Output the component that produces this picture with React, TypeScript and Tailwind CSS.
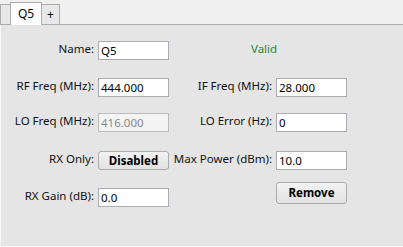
const font = "font-['Noto_Sans',sans-serif] text-[11.5px]";

function Field({ value, disabled }: { value: string; disabled?: boolean }) {
  return (
    <input
      readOnly
      value={value}
      className={`h-[19px] w-[71px] border px-[2px] outline-none ${font} ${
        disabled
          ? "border-[#bcbcbc] bg-[#f4f4f4] text-[#8a8a8a]"
          : "border-[#abadb3] bg-white text-black"
      }`}
    />
  );
}

function Btn({ label, className = "" }: { label: string; className?: string }) {
  return (
    <button
      className={`w-[71px] rounded-[3px] border border-[#acacac] bg-gradient-to-b from-[#f2f2f2] to-[#e2e2e2] font-bold text-black ${font} ${className}`}
    >
      {label}
    </button>
  );
}

function Label({ text, right }: { text: string; right?: boolean }) {
  return (
    <div className={`${right ? "w-[103px]" : "w-[93px]"} shrink-0 text-right text-[#111] ${font}`}>
      {text}
    </div>
  );
}

export default function App() {
  return (
    <div className="flex h-[247px] w-[403px] flex-col overflow-hidden bg-[#f0f0f0]">
      {/* tab strip */}
      <div className="flex h-[25px] shrink-0 items-end border-b border-[#acacac]">
        <div className="h-[20px] w-[11px] border border-b-0 border-[#acacac] bg-[#e8e8e8]" />
        <div
          className={`relative z-10 -mb-px -ml-px flex h-[23px] w-[32px] items-center justify-center border border-b-0 border-[#acacac] bg-white text-black ${font} text-[12px]`}
        >
          Q5
        </div>
        <div
          className={`-ml-px flex h-[20px] w-[19px] items-center justify-center border border-b-0 border-[#acacac] bg-[#e8e8e8] text-black ${font} text-[12px]`}
        >
          +
        </div>
      </div>

      {/* panel */}
      <div className="flex flex-1 flex-col border-b border-l border-[#f7f7f7] bg-[#e5e5e5]">
        <div className="mt-[14px] flex h-[19px] items-center">
          <Label text="Name:" />
          <div className="ml-[4px]">
            <Field value="Q5" />
          </div>
          <div className={`ml-[82px] text-[#1a8a3c] ${font}`}>Valid</div>
        </div>

        <div className="mt-[18px] flex h-[19px] items-center">
          <Label text="RF Freq (MHz):" />
          <div className="ml-[4px]">
            <Field value="444.000" />
          </div>
          <Label text="IF Freq (MHz):" right />
          <div className="ml-[4px]">
            <Field value="28.000" />
          </div>
        </div>

        <div className="mt-[16px] flex h-[19px] items-center">
          <Label text="LO Freq (MHz):" />
          <div className="ml-[4px]">
            <Field value="416.000" disabled />
          </div>
          <Label text="LO Error (Hz):" right />
          <div className="ml-[4px]">
            <Field value="0" />
          </div>
        </div>

        <div className="mt-[19px] flex h-[19px] items-center">
          <Label text="RX Only:" />
          <div className="ml-[4px]">
            <Btn label="Disabled" className="h-[19px]" />
          </div>
          <Label text="Max Power (dBm):" right />
          <div className="ml-[4px]">
            <Field value="10.0" />
          </div>
        </div>

        <div className="mt-[18px] flex h-[19px] items-center">
          <Label text="RX Gain (dB):" />
          <div className="ml-[4px]">
            <Field value="0.0" />
          </div>
          <div className="w-[103px]" />
          <div className="ml-[4px] -mt-[8px]">
            <Btn label="Remove" className="h-[22px]" />
          </div>
        </div>
      </div>
    </div>
  );
}
